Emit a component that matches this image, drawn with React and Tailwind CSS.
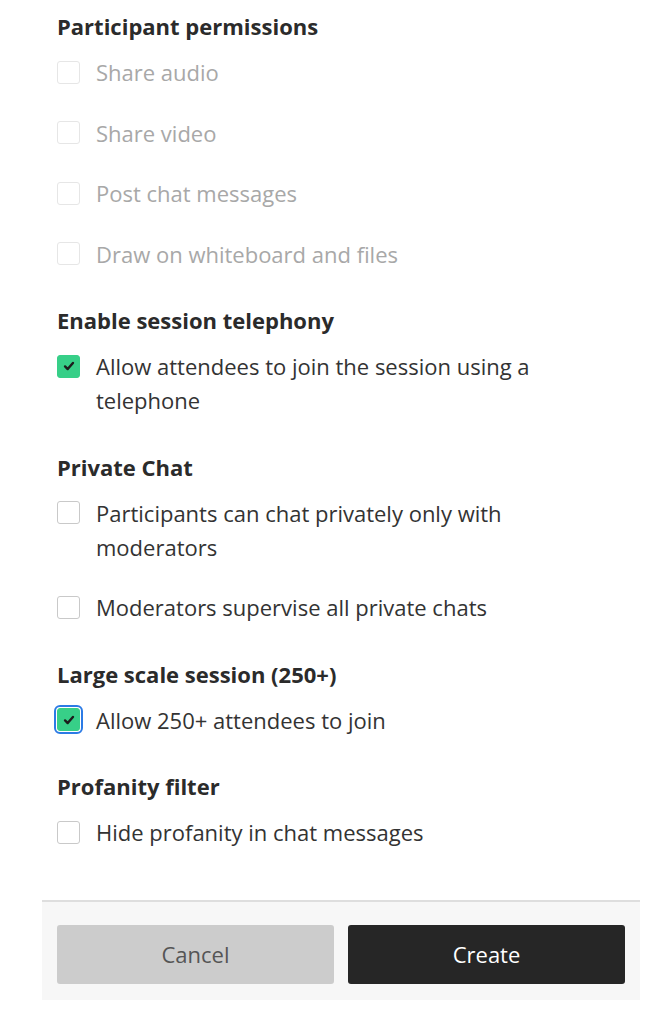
import React from "react";

const sections = [
  {
    title: "Participant permissions",
    items: [
      { label: "Share audio", disabled: true },
      { label: "Share video", disabled: true },
      { label: "Post chat messages", disabled: true },
      { label: "Draw on whiteboard and files", disabled: true },
    ],
  },
  {
    title: "Enable session telephony",
    items: [{ label: "Allow attendees to join the session using a telephone", checked: true }],
  },
  {
    title: "Private Chat",
    items: [
      { label: "Participants can chat privately only with moderators" },
      { label: "Moderators supervise all private chats" },
    ],
  },
  {
    title: "Large scale session (250+)",
    items: [{ label: "Allow 250+ attendees to join", checked: true, focused: true }],
  },
  {
    title: "Profanity filter",
    items: [{ label: "Hide profanity in chat messages" }],
  },
];

function Box({ checked, disabled, focused }) {
  let cls = "border-[#c9c9c9] bg-white";
  if (disabled) cls = "border-[#e6e6e6] bg-white";
  if (checked) cls = "border-[#37cf88] bg-[#37cf88]";
  return (
    <span
      className={`mt-[5.5px] shrink-0 w-[23px] h-[23px] rounded-[3px] border flex items-center justify-center ${cls} ${
        focused ? "outline-[2.5px] outline-offset-1 outline-[#2c7be5]" : ""
      }`}
    >
      {checked && (
        <svg viewBox="0 0 16 16" className="w-[14px] h-[14px]" fill="none" stroke="#1d1d1d" strokeWidth={2.8} strokeLinecap="round" strokeLinejoin="round">
          <path d="M3.5 8.5l3 3 6-7" />
        </svg>
      )}
    </span>
  );
}

export default function App() {
  return (
    <div className="bg-white min-h-[1024px] pl-[42px] pr-[17px]" style={{ fontFamily: "'Open Sans', sans-serif" }}>
      <div className="px-[15px] pt-[11px] pb-[51px] flex flex-col gap-[34.5px]">
        {sections.map((s) => (
          <section key={s.title}>
            <h2 className="text-[22px] leading-[30px] font-bold text-[#2b2b2b] mb-[14px]">{s.title}</h2>
            <div className="flex flex-col gap-[26.5px]">
              {s.items.map((it) => (
                <label key={it.label} className="flex items-start gap-[16px] max-w-[500px]">
                  <Box checked={it.checked} disabled={it.disabled} focused={it.focused} />
                  <span className={`text-[22px] leading-[34px] ${it.disabled ? "text-[#a8a8a8]" : "text-[#333333]"}`}>
                    {it.label}
                  </span>
                </label>
              ))}
            </div>
          </section>
        ))}
      </div>
      <div className="border-t-2 border-[#dedede] bg-[#f7f7f7] px-[15px] pt-[23px] pb-[16px] flex gap-[14px]">
        <button className="flex-1 h-[59px] rounded-[3px] bg-[#cccccc] text-[#555555] text-[22px]">Cancel</button>
        <button className="flex-1 h-[59px] rounded-[3px] bg-[#262626] text-white text-[22px] font-medium">Create</button>
      </div>
    </div>
  );
}
